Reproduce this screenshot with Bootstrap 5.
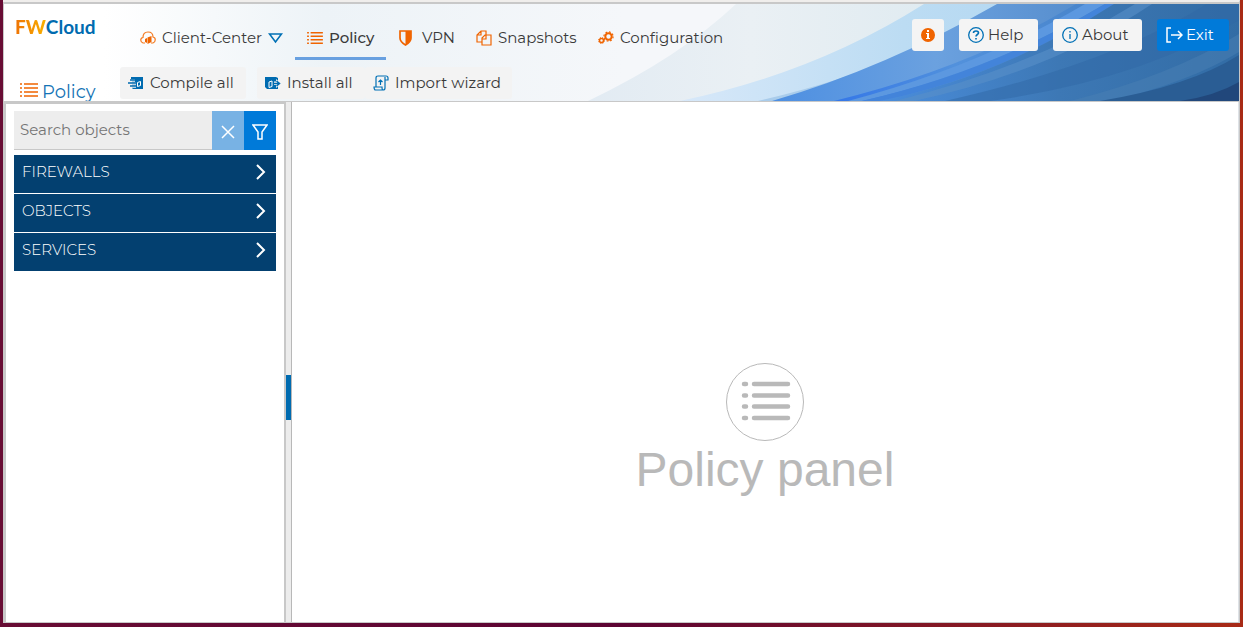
<!DOCTYPE html>
<html lang="en">
<head>
<meta charset="utf-8">
<meta name="viewport" content="width=device-width, initial-scale=1">
<title>FWCloud - Policy</title>
<link href="https://cdn.jsdelivr.net/npm/bootstrap@5.3.0/dist/css/bootstrap.min.css" rel="stylesheet">
<style>
:root{--line:#c8c8c8;--brand:#006bb0;--accent:#f06400;--action:#007ad9}
body{font-family:Montserrat,Inter,sans-serif;font-size:15px;line-height:20px;color:#3a3a3a;background:linear-gradient(90deg,#680c34,#5c0433 50%,#a82a16);padding:0 3px 4px 3px}
.window-frame{background:#fff;border-top:2px solid #f0eeec;border-right:1px solid var(--line);border-bottom:1px solid var(--line)}
.app-header{border-top:2px solid var(--line);border-bottom:1px solid var(--line);border-left:1px solid var(--line);height:100px;background:linear-gradient(90deg,#fff 100px,#edf3f7 320px,#f5f7fa 620px)}
.waves{z-index:0}
.brand-col{width:116px;padding:9px 0 0 11px}
.logo{font:bold 19px/28px Lato,sans-serif;color:var(--brand);text-decoration:none}
.logo b{background:linear-gradient(90deg,#ee7203,#f9b000);-webkit-background-clip:text;background-clip:text;color:transparent}
.page-title{font-size:18px;line-height:24px;color:#1473b5;margin:39px 0 0 5px;font-weight:400;gap:4px}
.page-title svg{margin-bottom:4px}
.tabs{display:grid;grid-template-columns:167px 92px 77px 122px 147px;padding:12px 0 0 8px}
.tabs a{height:44px;padding:3px 12px 0;gap:6px;color:#3a3a3a;text-decoration:none;white-space:nowrap;border-bottom:3px solid transparent}
.tabs a.active{border-color:#68a0e0;font-weight:500;margin-right:1px}
.tabs svg,.tool svg{flex:none}
.tool{background:#f3f3f3;height:32px;border:0;border-radius:3px;padding:0 8px;gap:6px;color:#3a3a3a;white-space:nowrap}
.tool-row{margin-top:7px}
.tool-wide{width:126px;margin-right:11px}.tool-mid{width:108px}.tool-last{width:147px}
.top-actions{gap:15px;padding:15px 10px 0 0}
.top-actions .btn{--bs-btn-padding-x:8px;--bs-btn-padding-y:0;--bs-btn-border-radius:3px;--bs-btn-border-width:0;--bs-btn-font-size:15px;height:32px;gap:3px;background:#f4f4f4;color:#3a3a3a}
.top-actions .btn-exit{background:var(--action);color:#fff;width:72px}
.w-help{width:79px}.w-about{width:89px}
.sidebar{width:283px;border:2px solid var(--line);border-left-width:3px;border-bottom:0;padding:7px 8px}
.search input{height:39px;background:#ededed;border:0;border-bottom:1px solid #c8c8c8;padding:0 6px 1px;min-width:0;outline:0;color:#333}
.search input::placeholder{color:#757575;opacity:1}
.search button{flex:none;width:32px;height:39px;border:0;background:var(--action);color:#fff;padding:0}
.search .clear{background:#78b2e4}
.groups{gap:1px;margin-top:5px}
.group-item{height:38px;background:#034070;color:#fff;border:0;padding:0 7px 4px 8px;text-align:left;font-weight:300}
.splitter{width:6px;background:#ececec;border-right:1px solid #b8b8b8}
.grip{height:45px;background:#006bb0;margin-top:13px}
.half{flex:1 1 0}
.empty-title{font:48px/56px "Liberation Sans",sans-serif;color:#b9b9b9;margin:0}
</style>
</head>
<body class="vh-100">
<svg class="d-none" aria-hidden="true">
  <symbol id="list" viewBox="0 0 18 16"><path d="M0 2h2M4 2h14M0 6h2M4 6h14M0 10h2M4 10h14M0 14h2M4 14h14" stroke="currentColor" stroke-width="1.5" fill="none"/></symbol>
</svg>
<div class="window-frame h-100 d-flex flex-column">
<header class="app-header d-flex position-relative overflow-hidden flex-shrink-0">
  <svg class="waves position-absolute top-0 end-0 h-100" viewBox="580 4 659 97" preserveAspectRatio="xMaxYMid slice" aria-hidden="true">
    <defs>
      <linearGradient id="w1"><stop stop-color="#e2ebf3"/><stop offset=".25" stop-color="#eaf0f4"/><stop offset="1" stop-color="#cfe3ec"/></linearGradient>
      <linearGradient id="w2"><stop stop-color="#d7e8f9"/><stop offset=".4" stop-color="#bcdcf3"/><stop offset="1" stop-color="#a8d2ef"/></linearGradient>
      <linearGradient id="w3"><stop stop-color="#4d8fe2"/><stop offset=".35" stop-color="#6ba1df"/><stop offset="1" stop-color="#4079ba"/></linearGradient>
      <linearGradient id="w4"><stop stop-color="#3477e8"/><stop offset=".3" stop-color="#5291dc"/><stop offset="1" stop-color="#3f78b8"/></linearGradient>
      <linearGradient id="w5"><stop stop-color="#4a8ddc"/><stop offset=".5" stop-color="#3d78b5"/><stop offset="1" stop-color="#326ca5"/></linearGradient>
    </defs>
    <path fill="url(#w1)" d="M588 101Q680 57 736 4H1239V101Z"/>
    <path fill="url(#w2)" d="M680 101Q815 73 924 4H1239V101Z"/>
    <path fill="#a9cceb" d="M758 101Q840 82 900 56L870 72Q820 92 785 101Z"/>
    <path fill="url(#w3)" d="M772 101Q885 68 997 4H1239V101Z"/>
    <path fill="url(#w4)" d="M834 101Q970 68 1076 4H1239V101Z"/>
    <path fill="#5c98e0" d="M848 101Q980 66 1085 4H1105Q990 72 862 101Z"/>
    <path fill="#4384da" d="M862 101Q990 72 1105 4H1114Q1000 77 879 101Z"/>
    <path fill="url(#w5)" d="M879 101Q1000 77 1114 4H1239V101Z"/>
    <path fill="#598fc8" opacity=".6" d="M895 101Q1035 66 1135 4H1152Q1050 72 914 101Z"/>
    <path fill="#2f68a5" opacity=".5" d="M945 101Q1110 64 1207 4H1239V20Q1140 80 990 101Z"/>
    <path fill="#497fb4" opacity=".5" d="M1070 101Q1170 76 1239 34V52Q1190 82 1110 101Z"/>
    <path fill="#2a5d94" d="M1100 101Q1190 86 1239 55V101Z"/>
    <path fill="#21477b" d="M1180 101Q1215 96 1239 82V101Z"/>
  </svg>
  <div class="brand-col flex-shrink-0 position-relative">
    <a class="logo d-block" href="#"><b>FW</b>Cloud</a>
    <h1 class="page-title d-flex align-items-center"><svg width="18" height="16" color="#f06400" aria-hidden="true"><use href="#list"/></svg>Policy</h1>
  </div>
  <div class="flex-grow-1 position-relative">
    <nav class="tabs" aria-label="Main">
      <a href="#" class="d-flex align-items-center"><svg width="16" height="14" viewBox="0 0 16 14" fill="none" stroke="#f47a20" stroke-width="1.2"><path d="M5 12H3C0 11 0 7 3 6.500C3 3 5 1 8 1s5 2 5 5c3 .5 3 5 0 6h-2"/><path fill="#f06400" stroke="none" d="M5 8l2-1v5l-2-1zM7.500 6.500l4-1.500v6l-4 2z"/></svg>Client-Center<svg width="15" height="12" viewBox="0 0 15 12" fill="none" stroke="#0070b5" stroke-width="1.600"><path d="M1.500 2h12L7.500 10z"/></svg></a>
      <a href="#" class="d-flex align-items-center active" aria-current="page"><svg width="16" height="14" color="#f06400"><use href="#list"/></svg>Policy</a>
      <a href="#" class="d-flex align-items-center"><svg class="me-1" width="13" height="16" viewBox="0 0 13 16" fill="none" stroke="#f06400" stroke-width="1.700"><path d="M1 1h11v7c0 3-2 5-5.500 7C3 13 1 11 1 8z"/><path fill="#f06400" stroke="none" d="M6.500 1H12v7c0 3-2 5-5.500 7z"/></svg>VPN</a>
      <a href="#" class="d-flex align-items-center"><svg width="16" height="16" viewBox="0 0 16 16" fill="none" stroke="#f06400" stroke-width="1.200"><path d="M6 12H1V5l4-4h5v4M5 1v4H1M6 8l3-3h6v10H6zM10 5v4H6"/></svg>Snapshots</a>
      <a href="#" class="d-flex align-items-center"><svg width="16" height="14" viewBox="0 0 16 14" fill="none" stroke="#f06400"><circle cx="10.500" cy="5.500" r="3.200" stroke-width="2"/><circle cx="10.500" cy="5.500" r="4.600" stroke-width="1.200" stroke-dasharray="1.800 1.800"/><circle cx="3.500" cy="9.500" r="2" stroke-width="1.500"/><circle cx="3.500" cy="9.500" r="3" stroke-dasharray="1.200 1.200"/></svg>Configuration</a>
    </nav>
    <div class="tool-row d-flex">
      <button class="tool tool-wide d-flex align-items-center" type="button"><svg width="16" height="14" viewBox="0 0 16 14"><path fill="#006bb0" d="M3 1h12v12H5l-1-1V4H3z"/><path d="M0 4.500h7M0 7.500h8M2 10.500h6" stroke="#f3f3f3" stroke-width="2.500"/><path d="M2 4h6M0 7h8M2 10h6" stroke="#006bb0" stroke-width="1.500"/><path fill="none" stroke="#fff" d="M9.500 6.500l3-1v4l-3 1z"/></svg>Compile all</button>
      <button class="tool tool-mid d-flex align-items-center" type="button"><svg width="16" height="14" viewBox="0 0 16 14"><path fill="#006bb0" d="M0 1h11l2 1v11H2l-2-2z"/><path fill="none" stroke="#fff" d="M4 6l3-1v5.500l-3 1z"/><path d="M9 5.500h2V3l5 4.500-5 4.500V9H9z" fill="#f3f3f3"/><path d="M8 7.500h6M11.500 5L14.500 7.500l-3 2.500" fill="none" stroke="#006bb0" stroke-width="1.500"/></svg>Install all</button>
      <button class="tool tool-last d-flex align-items-center" type="button"><svg width="16" height="16" viewBox="0 0 16 16" fill="none" stroke="#0070b5" stroke-width="1.200"><path d="M3 12V3q0-2 2-2h8q2 0 2 2v2h-3v8q0 2-2 2H2q-1-1-1-3h8q0 3 1 3M12 5V2M7.500 10V5M5.500 7l2-2 2 2"/></svg>Import wizard</button>
    </div>
  </div>
  <div class="top-actions d-flex align-items-start flex-shrink-0 position-relative">
    <button class="btn d-flex align-items-center" type="button" aria-label="Information"><svg width="16" height="16" viewBox="0 0 16 16"><circle cx="8" cy="8" r="7" fill="#f06400"/><path fill="#fff" d="M7 3h2v2H7zM6 6h3v5h1v1H6v-1h1V7H6z"/></svg></button>
    <button class="btn w-help d-flex align-items-center" type="button"><svg width="18" height="18" viewBox="0 0 18 18" fill="none" stroke="#0070b5" stroke-width="1.300"><circle cx="9" cy="9" r="7.300"/><path stroke-width="1.600" d="M6.500 7q0-2 2.500-2t2.500 2c0 1.500-2.500 1.500-2.500 3.500M9 12v1.500"/></svg>Help</button>
    <button class="btn w-about d-flex align-items-center" type="button"><svg width="18" height="18" viewBox="0 0 18 18" fill="none" stroke="#0070b5" stroke-width="1.300"><circle cx="9" cy="9" r="7.300"/><path d="M9 5v1.500M9 8v5"/></svg>About</button>
    <button class="btn btn-exit d-flex align-items-center" type="button"><svg width="18" height="18" viewBox="0 0 18 18" fill="none" stroke="#fff" stroke-width="1.500"><path d="M6 2H2v14h4M6 9h11M13 5l4 4-4 4"/></svg>Exit</button>
  </div>
</header>
<div class="d-flex flex-grow-1">
  <aside class="sidebar flex-shrink-0">
    <form class="search d-flex">
      <input class="flex-grow-1 rounded-0" type="text" placeholder="Search objects" aria-label="Search objects">
      <button class="clear" type="button" aria-label="Clear"><svg width="16" height="16" viewBox="0 0 16 16" stroke="#fff" stroke-width="1.500"><path d="M2 2l12 12M14 2L2 14"/></svg></button>
      <button type="button" aria-label="Filter"><svg width="16" height="18" viewBox="0 0 16 18" fill="none" stroke="#fff" stroke-width="1.500"><path d="M1 2h14l-5 7v7H6V9z"/></svg></button>
    </form>
    <div class="groups d-grid">
      <button class="group-item d-flex align-items-center justify-content-between" type="button">FIREWALLS<svg width="16" height="16" viewBox="0 0 16 16" fill="none" stroke="#fff" stroke-width="2"><path d="M4 1l7 7-7 7"/></svg></button>
      <button class="group-item d-flex align-items-center justify-content-between" type="button">OBJECTS<svg width="16" height="16" viewBox="0 0 16 16" fill="none" stroke="#fff" stroke-width="2"><path d="M4 1l7 7-7 7"/></svg></button>
      <button class="group-item d-flex align-items-center justify-content-between" type="button">SERVICES<svg width="16" height="16" viewBox="0 0 16 16" fill="none" stroke="#fff" stroke-width="2"><path d="M4 1l7 7-7 7"/></svg></button>
    </div>
  </aside>
  <div class="splitter flex-shrink-0 d-flex flex-column"><div class="half"></div><div class="half"><div class="grip"></div></div></div>
  <main class="flex-grow-1 d-flex flex-column border-end">
    <div class="half"></div>
    <div class="half text-center">
      <svg class="d-block mx-auto" width="80" height="80" viewBox="0 0 80 80" fill="none" stroke="#b9b9b9"><circle cx="40" cy="40" r="38.500"/><path stroke-width="4.500" stroke-linecap="round" d="M19 22h2M29 22h34M19 33.500h2M29 33.500h34M19 44.500h2M29 44.500h34M19 56h2M29 56h34"/></svg>
      <h2 class="empty-title">Policy panel</h2>
    </div>
  </main>
</div>
</div>
<script src="https://cdn.jsdelivr.net/npm/bootstrap@5.3.0/dist/js/bootstrap.bundle.min.js"></script>
</body>
</html>
